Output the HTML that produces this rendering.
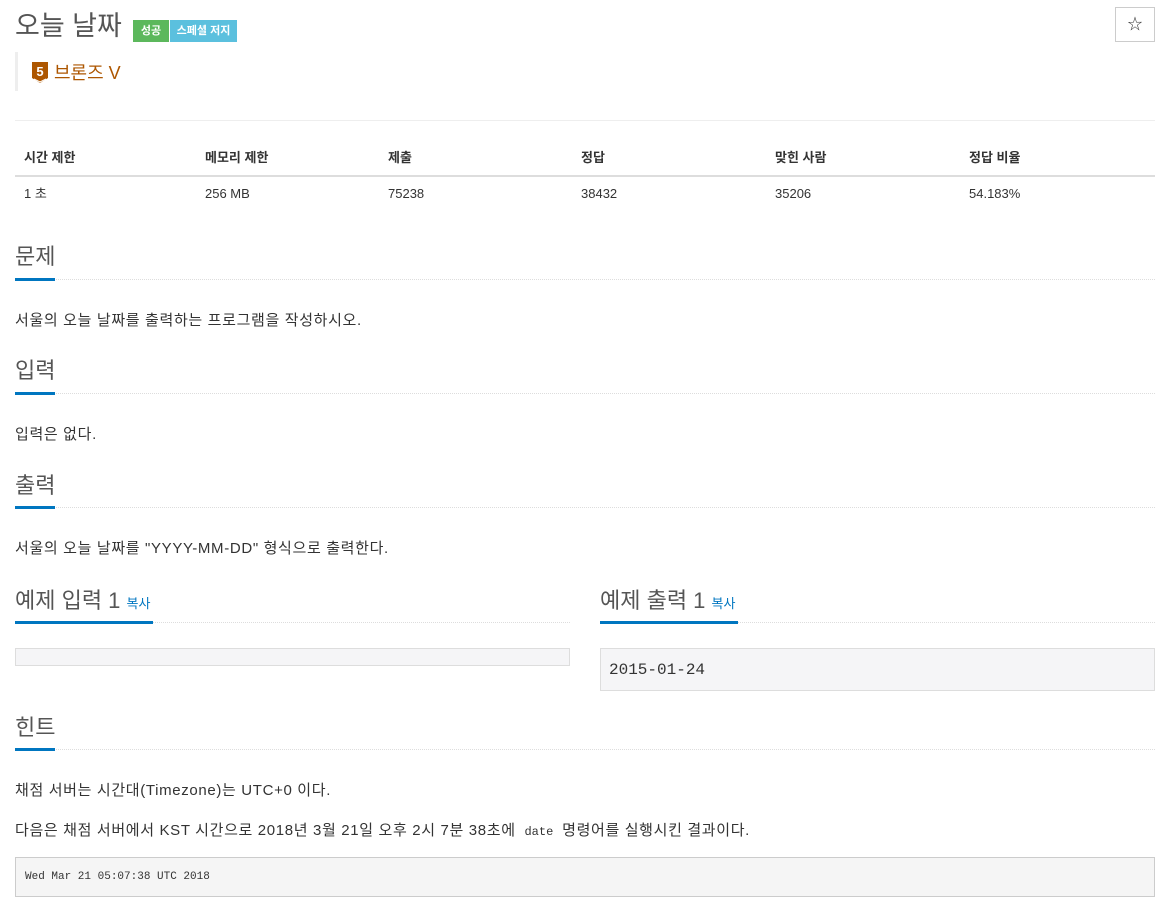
<!DOCTYPE html>
<html><head><meta charset="utf-8"><style>
body{margin:0;width:1174px;height:913px;background:#fff;font-family:"Liberation Sans","Noto Sans CJK KR",sans-serif;color:#333;position:relative;overflow:hidden}
.a{position:absolute;white-space:nowrap}
.h{font-size:22px;color:#555;line-height:28px}
.ul{position:absolute;height:3px;background:#0076c0}
.dl{position:absolute;left:15px;width:1140px;border-top:1px dotted #ddd}
.t{font-size:15px;line-height:20px;letter-spacing:0.65px}
.th{font-size:13px;font-weight:bold;line-height:18px}
.td{font-size:13px;line-height:18px}
.mono{font-family:"Liberation Mono","DejaVu Sans Mono",monospace}
</style></head><body>
<div class="a" style="left:15px;top:6px;font-size:27px;color:#555;line-height:40px">오늘 날짜</div>
<div class="a" style="left:133px;top:20px;width:36px;height:22px;background:#5cb85c;color:#fff;font-size:11px;font-weight:bold;text-align:center;line-height:22px">성공</div>
<div class="a" style="left:170px;top:20px;width:67px;height:22px;background:#5bc0de;color:#fff;font-size:11px;font-weight:bold;text-align:center;line-height:22px">스페셜 저지</div>
<div class="a" style="left:1115px;top:7px;width:38px;height:33px;border:1px solid #ccc;text-align:center;line-height:33px;font-size:15px;color:#333">☆</div>
<div class="a" style="left:15px;top:52px;width:3px;height:39px;background:#eee"></div>
<svg class="a" style="left:32px;top:62px" width="16" height="22" viewBox="0 0 16 22"><path d="M0 0H16V16L8 21L0 16Z" fill="#ad5600"/><path d="M2 17L8 20L14 17" stroke="#fff" fill="none" stroke-width="1"/><text x="8" y="14" fill="#fff" font-size="13" font-weight="bold" text-anchor="middle" font-family="Liberation Sans">5</text></svg>
<div class="a" style="left:54px;top:61px;font-size:18px;color:#ad5600;line-height:24px">브론즈 V</div>
<div class="a" style="left:15px;top:120px;width:1140px;border-top:1px solid #eee"></div>
<div class="a th" style="left:24px;top:149px">시간 제한</div>
<div class="a th" style="left:205px;top:149px">메모리 제한</div>
<div class="a th" style="left:388px;top:149px">제출</div>
<div class="a th" style="left:581px;top:149px">정답</div>
<div class="a th" style="left:775px;top:149px">맞힌 사람</div>
<div class="a th" style="left:969px;top:149px">정답 비율</div>
<div class="a" style="left:15px;top:175px;width:1140px;border-top:2px solid #ddd"></div>
<div class="a td" style="left:24px;top:185px">1 초</div>
<div class="a td" style="left:205px;top:185px">256 MB</div>
<div class="a td" style="left:388px;top:185px">75238</div>
<div class="a td" style="left:581px;top:185px">38432</div>
<div class="a td" style="left:775px;top:185px">35206</div>
<div class="a td" style="left:969px;top:185px">54.183%</div>

<div class="a h" style="left:15px;top:243px">문제</div>
<div class="dl" style="top:279px"></div><div class="ul" style="left:15px;width:40px;top:278px"></div>
<div class="a t" style="left:15px;top:311px">서울의 오늘 날짜를 출력하는 프로그램을 작성하시오.</div>

<div class="a h" style="left:15px;top:357px">입력</div>
<div class="dl" style="top:393px"></div><div class="ul" style="left:15px;width:40px;top:392px"></div>
<div class="a t" style="left:15px;top:425px">입력은 없다.</div>

<div class="a h" style="left:15px;top:472px">출력</div>
<div class="dl" style="top:507px"></div><div class="ul" style="left:15px;width:40px;top:506px"></div>
<div class="a t" style="left:15px;top:539px">서울의 오늘 날짜를 "YYYY-MM-DD" 형식으로 출력한다.</div>

<div class="a h" style="left:15px;top:587px">예제 입력 1 <span style="font-size:13px;color:#0076c0">복사</span></div>
<div class="a" style="left:15px;top:622px;width:555px;border-top:1px dotted #ddd"></div><div class="ul" style="left:15px;width:138px;top:621px"></div>
<div class="a" style="left:15px;top:648px;width:553px;height:16px;background:#f5f5f7;border:1px solid #ddd"></div>

<div class="a h" style="left:600px;top:587px">예제 출력 1 <span style="font-size:13px;color:#0076c0">복사</span></div>
<div class="a" style="left:600px;top:622px;width:555px;border-top:1px dotted #ddd"></div><div class="ul" style="left:600px;width:138px;top:621px"></div>
<div class="a" style="left:600px;top:648px;width:553px;height:41px;background:#f5f5f7;border:1px solid #ddd"></div>
<div class="a mono" style="left:609px;top:660px;font-size:16px;line-height:20px;color:#333">2015-01-24</div>

<div class="a h" style="left:15px;top:714px">힌트</div>
<div class="dl" style="top:749px"></div><div class="ul" style="left:15px;width:40px;top:748px"></div>
<div class="a t" style="left:15px;top:781px">채점 서버는 시간대(Timezone)는 UTC+0 이다.</div>
<div class="a t" style="left:15px;top:821px">다음은 채점 서버에서 KST 시간으로 2018년 3월 21일 오후 2시 7분 38초에 <span class="mono" style="font-size:12px;padding:0 4px;letter-spacing:0">date</span> 명령어를 실행시킨 결과이다.</div>
<div class="a" style="left:15px;top:857px;width:1138px;height:38px;background:#f5f5f5;border:1px solid #ccc"></div>
<div class="a mono" style="left:25px;top:870px;font-size:11px;line-height:14px;color:#333">Wed Mar 21 05:07:38 UTC 2018</div>
</body></html>
